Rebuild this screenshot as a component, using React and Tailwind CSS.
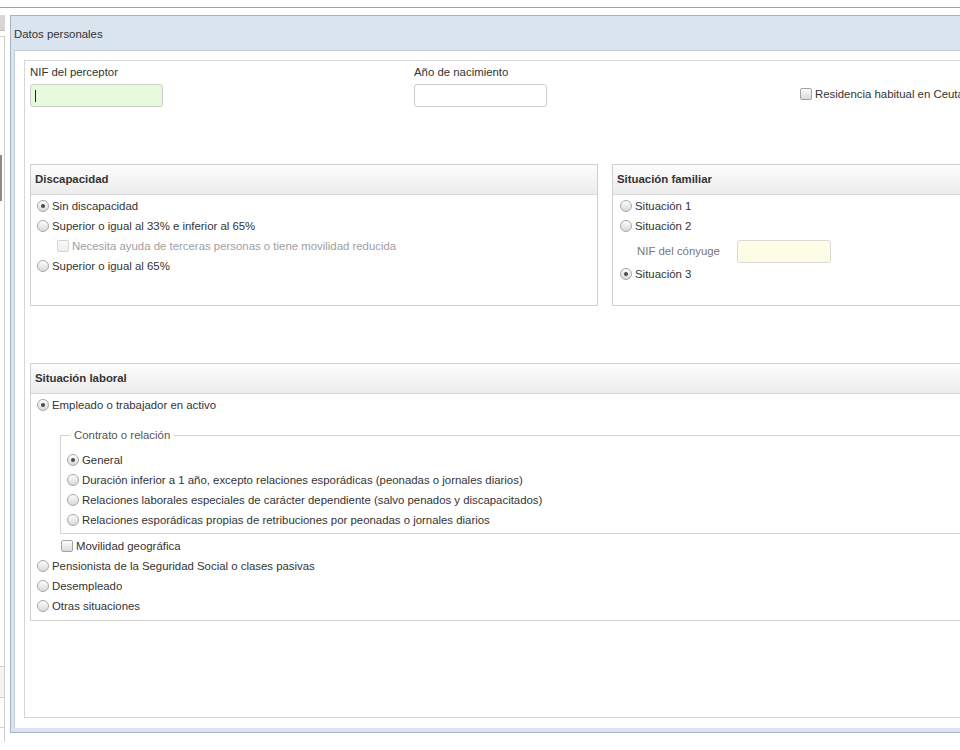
import React from 'react'

function Radio(props) {
    const { checked, label, className } = props
    return (
        <div className={`flex items-center h-[20px] gap-[3px] ${className || ''}`}>
            <span className='w-[12px] h-[12px] shrink-0 rounded-full border border-[#a9a9a9] bg-linear-to-b from-[#fdfdfd] to-[#d9d9d9] flex items-center justify-center'>
                {checked && <span className='w-[4px] h-[4px] rounded-full bg-[#4a4a4a]'></span>}
            </span>
            <span className='whitespace-nowrap'>{label}</span>
        </div>
    )
}

function Check(props) {
    const { label, disabled, className } = props
    return (
        <div className={`flex items-center h-[20px] gap-[3px] ${className || ''}`}>
            <span className={`w-[12px] h-[12px] shrink-0 rounded-[2px] border bg-linear-to-b ${disabled ? 'border-[#d4d4d4] from-[#fafafa] to-[#ededed]' : 'border-[#a3a3a3] from-[#fdfdfd] to-[#dadada]'}`}></span>
            <span className={`whitespace-nowrap ${disabled ? 'text-[#a0a0a0]' : ''}`}>{label}</span>
        </div>
    )
}

function Box(props) {
    const { title, className, children } = props
    return (
        <div className={`border border-[#d0d0d0] bg-white flex flex-col ${className || ''}`}>
            <div className='h-[30px] shrink-0 bg-linear-to-b from-[#fdfdfd] to-[#ececec] border-b border-[#d8d8d8] flex items-center pl-[4px] font-bold text-[#333]'>
                {title}
            </div>
            {children}
        </div>
    )
}

function LeftStrip() {
    return (
        <div className='w-[5px] shrink-0 flex flex-col'>
            <div className='h-[15px]'></div>
            <div className='h-[16px] bg-[#d6d6d6] border-b border-[#bdbdbd]'></div>
            <div className='h-[5px]'></div>
            <div className='flex-1 border-t border-r border-[#cfcfcf] flex flex-col'>
                <div className='h-[118px]'></div>
                <div className='h-[46px] w-[2px] bg-[#8a8a8a]'></div>
                <div className='h-[465px]'></div>
                <div className='h-[32px] border-t border-b border-[#cfcfcf] bg-[#f4f4f4]'></div>
                <div className='h-[30px] border-b border-[#cfcfcf]'></div>
            </div>
        </div>
    )
}

export default function App() {
    return (
        <div className="w-[960px] h-[750px] overflow-hidden bg-white font-['Liberation_Sans',Arial,sans-serif] text-[11.4px] leading-[13px] text-[#333]">
            <div className='h-[7px]'></div>
            <div className='h-px w-full bg-[#a3a3a3]'></div>
            <div className='flex h-[742px] -mt-[8px]'>
                <LeftStrip />
                <div className='ml-[5px] mt-[15px] w-[1200px] h-[718px] shrink-0 border border-[#a7b3bf] bg-[#d9e4ee] flex flex-col'>
                    <div className='h-[34px] shrink-0 flex items-center pl-[3px] pt-[2px] text-[#333]'>Datos personales</div>
                    <div className='flex-1 ml-[3px] mb-[4px] bg-white border-t border-l border-[#c3ccd5] pt-[9px] pl-[9px] pb-[9px]'>
                        <div className='h-[658px] border border-[#d6d6d6] p-[5px]'>
                            <div className='flex'>
                                <div className='w-[384px] shrink-0'>
                                    <div>NIF del perceptor</div>
                                    <div className='mt-[5px] w-[133px] h-[23px] rounded-[3px] border border-[#cccccc] bg-[#e6fbdc] flex items-center pl-[4px]'>
                                        <span className='w-px h-[12px] bg-[#222]'></span>
                                    </div>
                                </div>
                                <div className='w-[386px] shrink-0'>
                                    <div>Año de nacimiento</div>
                                    <div className='mt-[5px] w-[133px] h-[23px] rounded-[3px] border border-[#cccccc] bg-white'></div>
                                </div>
                                <div className='pt-[18px]'>
                                    <Check label='Residencia habitual en Ceuta o Melilla' />
                                </div>
                            </div>

                            <div className='flex mt-[57px] gap-[14px]'>
                                <Box title='Discapacidad' className='w-[568px] h-[142px]'>
                                    <div className='pt-[1px] pl-[6px]'>
                                        <Radio checked label='Sin discapacidad' />
                                        <Radio label='Superior o igual al 33% e inferior al 65%' />
                                        <Check disabled className='pl-[20px]' label='Necesita ayuda de terceras personas o tiene movilidad reducida' />
                                        <Radio label='Superior o igual al 65%' />
                                    </div>
                                </Box>
                                <Box title='Situación familiar' className='w-[568px] h-[142px]'>
                                    <div className='pt-[1px] pl-[7px]'>
                                        <Radio label='Situación 1' />
                                        <Radio label='Situación 2' />
                                        <div className='flex items-center mt-[4px] h-[23px] pl-[17px]'>
                                            <span className='w-[100px] text-[#777]'>NIF del cónyuge</span>
                                            <span className='w-[94px] h-[23px] rounded-[3px] border border-[#d9d9d9] bg-[#fdfde6]'></span>
                                        </div>
                                        <Radio checked className='mt-[1px]' label='Situación 3' />
                                    </div>
                                </Box>
                            </div>

                            <Box title='Situación laboral' className='mt-[57px] w-[1150px] h-[258px]'>
                                <div className='pt-[1px] pl-[6px]'>
                                    <Radio checked label='Empleado o trabajador en activo' />
                                    <fieldset className='mt-[14px] ml-[23px] border border-[#d3d3d3] pl-[6px] pt-[8px] pb-[3px]'>
                                        <legend className='ml-[3px] px-[4px] text-[#555] leading-[13px]'>Contrato o relación</legend>
                                        <Radio checked label='General' />
                                        <Radio label='Duración inferior a 1 año, excepto relaciones esporádicas (peonadas o jornales diarios)' />
                                        <Radio label='Relaciones laborales especiales de carácter dependiente (salvo penados y discapacitados)' />
                                        <Radio label='Relaciones esporádicas propias de retribuciones por peonadas o jornales diarios' />
                                    </fieldset>
                                    <Check className='mt-[2px] pl-[24px]' label='Movilidad geográfica' />
                                    <Radio label='Pensionista de la Seguridad Social o clases pasivas' />
                                    <Radio label='Desempleado' />
                                    <Radio label='Otras situaciones' />
                                </div>
                            </Box>
                        </div>
                    </div>
                </div>
            </div>
        </div>
    )
}
